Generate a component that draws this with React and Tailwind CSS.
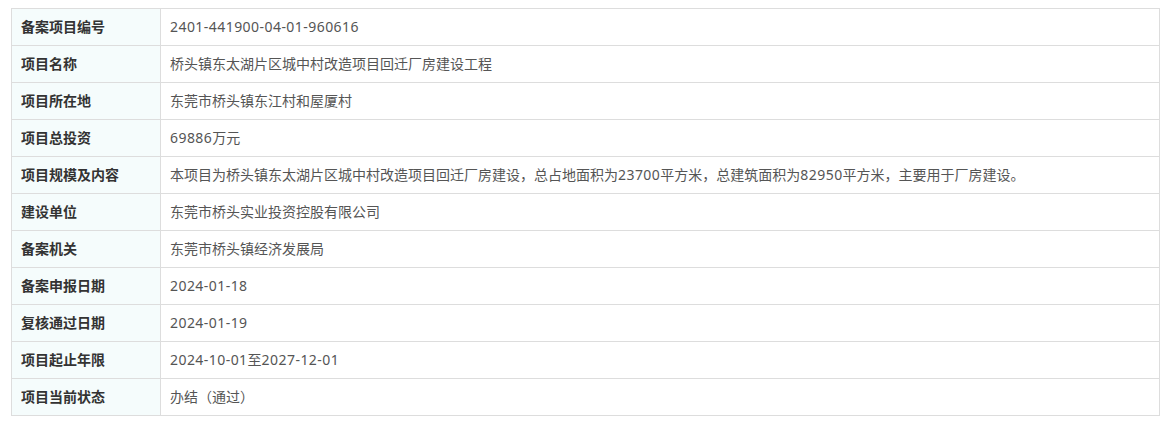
import React from "react";

const rows = [
  ["备案项目编号", "2401-441900-04-01-960616"],
  ["项目名称", "桥头镇东太湖片区城中村改造项目回迁厂房建设工程"],
  ["项目所在地", "东莞市桥头镇东江村和屋厦村"],
  ["项目总投资", "69886万元"],
  ["项目规模及内容", "本项目为桥头镇东太湖片区城中村改造项目回迁厂房建设，总占地面积为23700平方米，总建筑面积为82950平方米，主要用于厂房建设。"],
  ["建设单位", "东莞市桥头实业投资控股有限公司"],
  ["备案机关", "东莞市桥头镇经济发展局"],
  ["备案申报日期", "2024-01-18"],
  ["复核通过日期", "2024-01-19"],
  ["项目起止年限", "2024-10-01至2027-12-01"],
  ["项目当前状态", "办结（通过）"],
];

function Value({ text }) {
  const parts = text.split(/([0-9-]+)/);
  return parts.map((p, i) =>
    /^[0-9-]+$/.test(p) ? (
      <span key={i} className="tracking-[0.45px]">
        {p}
      </span>
    ) : (
      <React.Fragment key={i}>{p}</React.Fragment>
    )
  );
}

export default function App() {
  return (
    <div
      className="bg-white pt-[8px] pl-[11px] w-[1169px] h-[421px]"
      style={{ fontFamily: '"Noto Sans", "Noto Sans CJK SC", sans-serif' }}
    >
      <table className="w-[1149px] border-collapse text-[14px]">
        <tbody>
          {rows.map(([k, v]) => (
            <tr key={k} className="h-[37px]">
              <td className="w-[149px] border border-[#dddddd] bg-[#f5fcfc] pl-[9px] pb-[1px] font-bold text-[#333333] align-middle">
                {k}
              </td>
              <td className="border border-[#dddddd] pl-[9px] pb-[1px] text-[#555555] align-middle">
                <Value text={v} />
              </td>
            </tr>
          ))}
        </tbody>
      </table>
    </div>
  );
}
